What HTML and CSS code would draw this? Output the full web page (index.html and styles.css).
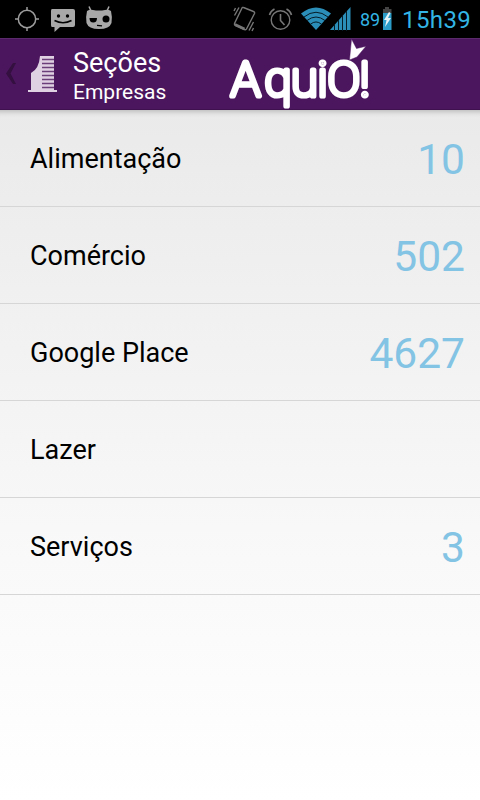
FILE: index.html
```html
<!DOCTYPE html>
<html lang="pt-BR">
<head>
    <meta charset="UTF-8">
    <meta name="viewport" content="width=device-width, initial-scale=1.0">
    <title>Seções - Empresas</title>
    <link rel="stylesheet" href="styles.css">
</head>
<body>
    <div class="status-bar">
        <svg class="status-left" width="120" height="38" viewBox="0 0 120 38">
            <g fill="none" stroke="#9c9c9c" stroke-width="1.500">
                <circle cx="27" cy="19" r="8.700"/>
                <path d="M27 7v4M27 27v4M15 19h4M35 19h4"/>
            </g>
            <path fill="#a8a8a8" d="M52 9h21q2 0 2 2v14q0 2-2 2H60l-5.500 5V27H52q-1 0-1-2V11q0-2 1-2z"/>
            <circle cx="58.500" cy="16" r="1.700"/>
            <circle cx="67.500" cy="16" r="1.700"/>
            <path d="M54.500 20.500q8.500 4.500 17 0" fill="none" stroke="#000" stroke-width="1.600"/>
            <path d="M91.500 12L89 6.500M106.500 12l2.500-5.500" stroke="#a8a8a8" stroke-width="1.500"/>
            <path fill="#a8a8a8" d="M87 11q3-2 6-1 6 1 12 0 3-1 6 1 1.500 6 .5 12-2 6-12.500 6t-12.500-6q-1-6 .5-12z"/>
            <path d="M89.500 18h7.500q0 4.500-3.750 4.500T89.500 18z"/>
            <circle cx="106" cy="19" r="3.500"/>
            <path d="M97 25.300l5 .5" stroke="#000" stroke-width="1.200"/>
        </svg>
        <svg class="status-right" width="130" height="38" viewBox="225 0 130 38">
            <g fill="none" stroke="#777" stroke-width="1.400">
                <path d="M243.500 7.500l10 4q1.500.5 1 2l-8 15.500q-.5 1-2 .5l-9-4q-1.500-.5-1-2l7.500-15.500q.5-1 1.500-.5z"/>
                <path d="M239 7.500l-4.500 8M235.500 8l-1.500 3M253.500 22l-4.500 8.500M253.500 28l-1.500 3"/>
                <path d="M235 24.500l9.500 4.500" stroke-width="2.500"/>
                <circle cx="280.500" cy="20" r="9.300"/>
                <path d="M280.500 14v6.500l4 4.500M269.500 15q1-4 5-6M291.500 15q-1-4-5-6" stroke-width="1.600"/>
            </g>
            <path fill="#2b8eb8" d="M301 13.500Q316 1.500 331 13.500L316 30z"/>
            <g fill="none" stroke="#061c26" stroke-width="1">
                <path d="M304 17q12-9.500 24 0M307 20.500q9-7 18 0M310.500 24.200q5.500-4.500 11 0"/>
            </g>
            <path fill="#2b8eb8" d="M330 30L350.500 7v23z"/>
            <path d="M334.500 25v6M338.500 20v11M342.500 16v15M346.500 11v20" stroke="#061c26" stroke-width="1"/>
        </svg>
        <span class="battery-level">89</span>
        <svg class="battery" width="9" height="24" viewBox="0 0 9 24">
            <path fill="#444" d="M2 0h4v2h2.500v4H0V2h2z"/>
            <path fill="#2b9bc7" d="M0 6h8.500v17H0z"/>
            <path fill="#e4f1f6" d="M6 5L1 13h2.500L2 20l6-9H5l2.500-5z"/>
        </svg>
        <span class="clock">15h39</span>
    </div>

    <div class="action-bar">
        <svg class="back" width="10" height="22" viewBox="0 0 10 22">
            <path fill="#33103f" d="M7 0h3L4.500 10.500 10 21H7L0 10.500z"/>
        </svg>
        <svg class="building" width="29" height="37" viewBox="0 0 29 37">
            <path fill="#dfd0e2" d="M12 0h14v34h3v2H0v-2h3V17q8-4 9-17z"/>
            <path stroke="#6b3f79" stroke-width="1.500" d="M14 3.500h12M14 7.500h12M14 11.500h12M14 15.500h12M14 19.500h12M14 23.500h12M14 27.500h12M14 31.500h12"/>
        </svg>
        <div class="titles">
            <div class="title">Seções</div>
            <div class="subtitle">Empresas</div>
        </div>
        <svg class="logo" width="150" height="74" viewBox="225 37 150 74">
            <text x="231 264.500 291 317.500 327.500 360" y="95.500">AquiO!</text>
            <path class="leaf" d="M349.500 60L351.500 39l5 9.500 9.500-2.300-9 10.800z"/>
        </svg>
    </div>

    <div class="list">
        <div class="row">
            <span class="name">Alimentação</span>
            <span class="count">10</span>
        </div>
        <div class="row">
            <span class="name">Comércio</span>
            <span class="count">502</span>
        </div>
        <div class="row">
            <span class="name">Google Place</span>
            <span class="count">4627</span>
        </div>
        <div class="row">
            <span class="name">Lazer</span>
        </div>
        <div class="row">
            <span class="name">Serviços</span>
            <span class="count">3</span>
        </div>
    </div>
</body>
</html>
```
FILE: styles.css
```css
body {
    margin: 0;
    height: 800px;
    display: flex;
    flex-direction: column;
    overflow: hidden;
    font-family: Roboto, sans-serif;
}
svg {
    display: block;
    flex: none;
}
.status-bar {
    display: flex;
    align-items: center;
    height: 38px;
    background: #000;
    color: #33b5e5;
}
.status-right {
    margin-left: 105px;
}
.battery-level {
    width: 23px;
    margin-left: 5px;
    font-size: 18px;
}
.battery {
    margin-top: -1px;
}
.clock {
    margin-left: 10px;
    margin-top: 2px;
    font-size: 24px;
    letter-spacing: 0.4px;
}
.action-bar {
    display: flex;
    box-sizing: border-box;
    height: 72px;
    background: #4b165e;
    border-top: 1px solid #5b2a6c;
    border-bottom: 1px solid #3f124f;
    color: #fff;
}
.back {
    margin: 24px 0 0 6px;
}
.building {
    margin: 17px 0 0 12px;
}
.titles {
    width: 168px;
    padding: 8px 0 0 16px;
    box-sizing: border-box;
}
.title {
    font-size: 27px;
    line-height: 32px;
}
.subtitle {
    font-size: 21px;
    line-height: 27px;
}
.logo {
    margin-top: -2px;
    overflow: visible;
}
.logo text {
    font-size: 49px;
    font-weight: 100;
    fill: #fff;
    stroke: #fff;
    stroke-width: 5.2px;
    stroke-linejoin: round;
}
.leaf {
    fill: #fff;
    stroke: #4b165e;
    stroke-width: 0.5px;
}
.list {
    flex: 1;
    background: linear-gradient(#eaeaea, #f9f9f9 65%, #fff);
    box-shadow: inset 0 7px 5px -5px #bbb;
}
.row {
    display: flex;
    align-items: center;
    justify-content: space-between;
    box-sizing: border-box;
    height: 97px;
    padding: 2px 15px 0 30px;
    border-bottom: 1px solid #d6d6d6;
}
.name {
    font-size: 27px;
}
.count {
    font-size: 42.5px;
    color: #83c3e4;
}
```
